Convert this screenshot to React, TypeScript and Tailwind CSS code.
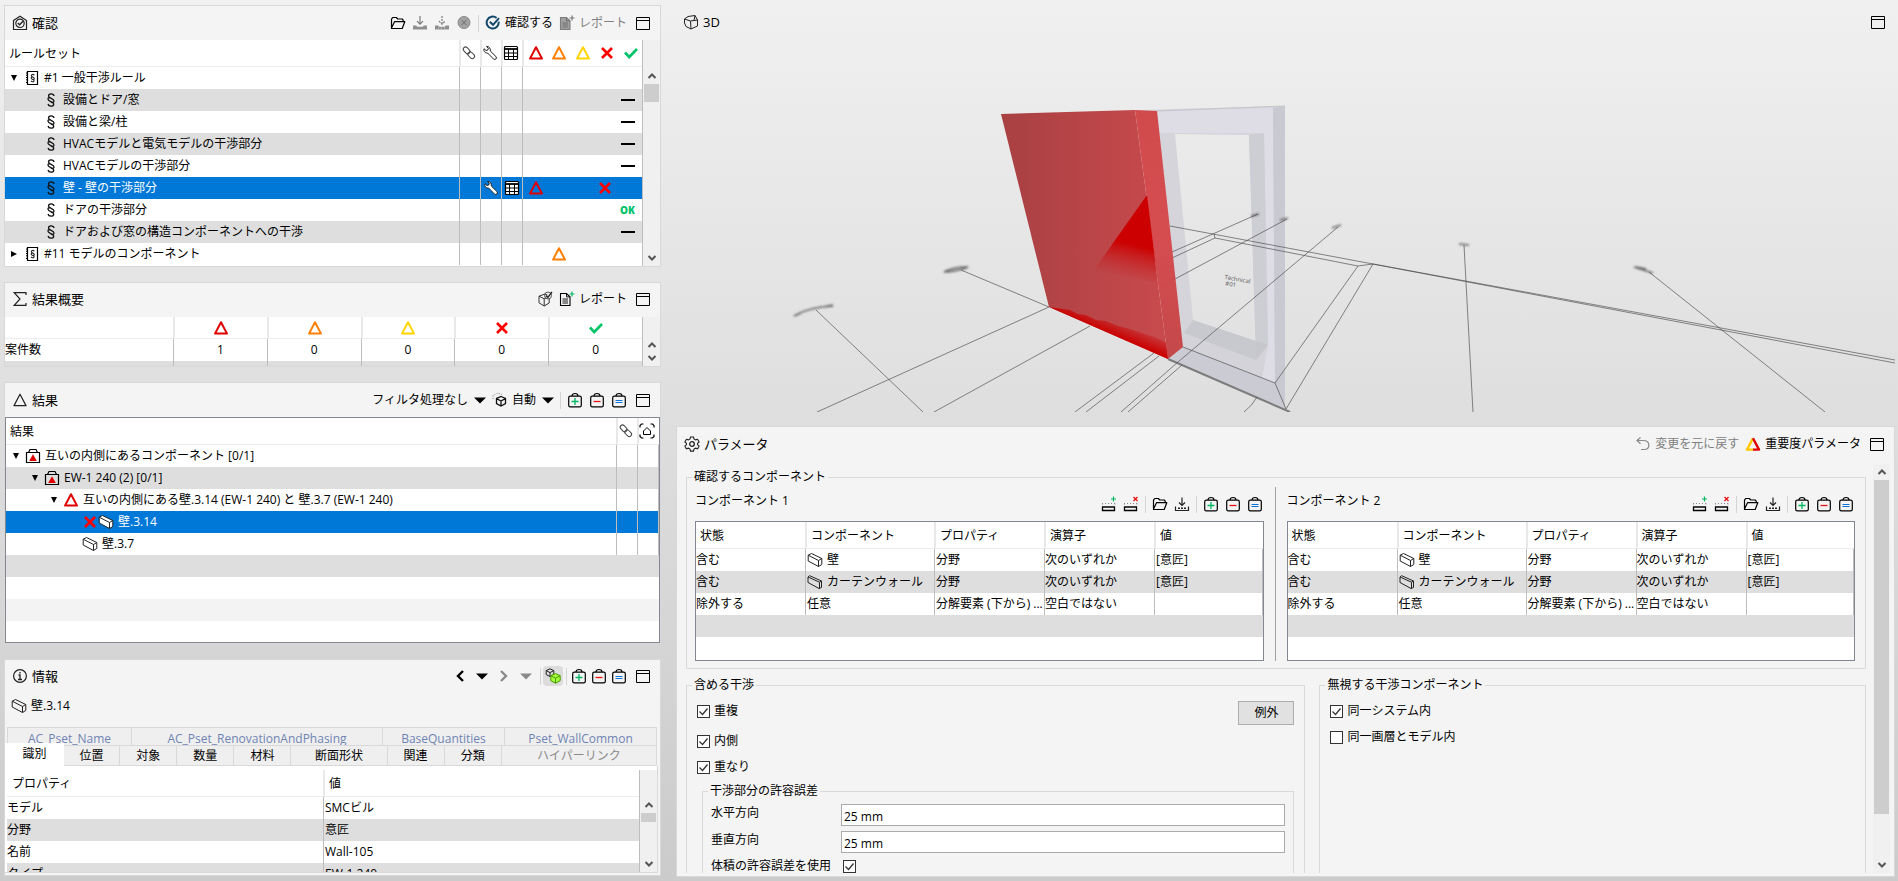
import { useState } from 'react'
import type { ReactNode } from 'react'
import clsx from 'clsx'

type IconProps = { className?: string; color?: string; thin?: boolean }

function Svg({ children, className }: { children: ReactNode; className?: string }) {
  return (
    <svg viewBox="0 0 16 16" fill="none" className={clsx('h-4 w-4 shrink-0', className)} aria-hidden="true">
      {children}
    </svg>
  )
}

const Triangle = ({ color = '#e00000', className, thin }: IconProps) => (
  <Svg className={className}>
    <path d="M8 2.2 14 13.6H2Z" stroke={color} strokeWidth={thin ? 1.2 : 2} strokeLinejoin="round" />
  </Svg>
)

const Cross = () => (
  <Svg>
    <path d="M3 3l10 10M13 3 3 13" stroke="#ff0000" strokeWidth="2.6" />
  </Svg>
)

const Check = () => (
  <Svg>
    <path d="m2 7.5 4.2 4.5L14 4" stroke="#00c46a" strokeWidth="2.6" />
  </Svg>
)

const Dash = () => (
  <Svg>
    <path d="M1 8h14" stroke="#000" strokeWidth="2" />
  </Svg>
)

const WindowIcon = () => (
  <Svg>
    <path d="M1.5 2.5h13v12h-13zM1.5 5.5h13" stroke="#000" />
  </Svg>
)

const Folder = () => (
  <Svg>
    <path
      d="M1.5 12.5V4.2l1.2-1.7h3.6L7.8 4h4.4l1 1.2v1.2M1.5 13l3-6.3h10.3l-2.6 6.8H1.5Z"
      stroke="#000"
      strokeWidth="1.2"
      strokeLinejoin="round"
    />
  </Svg>
)

const SaveIcon = () => (
  <Svg>
    <path d="M8 1.5v8M5 6.5l3 3 3-3" stroke="#222" strokeWidth="1.2" />
    <path d="M1.5 10.5v4h13v-4" stroke="#222" strokeWidth="1.2" />
    <path d="M4 12.2h2M7 12.2h2M10 12.2h2" stroke="#222" strokeWidth="1.6" />
  </Svg>
)

const SaveGray = ({ dashed }: { dashed?: boolean }) => (
  <Svg>
    <path d="M8 1v8M5 6.2l3 3 3-3" stroke="#7a7a7a" strokeWidth="1.2" strokeDasharray={dashed ? '2 1' : undefined} />
    <path d="M1 10.5h3l1.5 1.2h5l1.5-1.2h3v4H1z" fill="#8f8f8f" />
    {dashed && <path d="M4 13h8" stroke="#d4d4d4" strokeDasharray="1 2" />}
  </Svg>
)

const StopGray = () => (
  <Svg>
    <circle cx="8" cy="7.5" r="6" fill="#a3a3a3" stroke="#8a8a8a" />
    <path d="m5.5 5 5 5m0-5-5 5" stroke="#6b6b6b" />
  </Svg>
)

const CheckCircle = () => (
  <Svg>
    <path d="M13.6 6.6A6 6 0 1 1 11.6 3" stroke="#12496b" strokeWidth="2" />
    <path d="m4.8 6.8 3.2 3 6-6.6" stroke="#12496b" strokeWidth="2" />
  </Svg>
)

const DocPlus = ({ gray }: { gray?: boolean }) => (
  <Svg>
    <path
      d="M1.5 2.5h6l3.5 3.3v8.7H1.5z"
      fill={gray ? '#a0a0a0' : 'none'}
      stroke={gray ? '#7d7d7d' : '#000'}
      strokeWidth="1.1"
    />
    <path d="M7.5 2.5v3.4H11M3.5 8h5.5M3.5 10h5.5M3.5 12h5.5" stroke={gray ? '#6a6a6a' : '#000'} strokeWidth="0.9" />
    <path d="M13 .5v5M10.5 3h5" stroke={gray ? '#777' : '#00b862'} strokeWidth="1.2" />
  </Svg>
)

function Bag({ kind }: { kind: 'add' | 'remove' | 'set' }) {
  return (
    <Svg>
      <rect x="1.7" y="4.2" width="12.6" height="10.6" rx="1.6" stroke="#000" strokeWidth="1.2" />
      <path d="M5 4c0-1.4 1.2-2.5 3-2.5S11 2.6 11 4" stroke="#000" strokeWidth="1.2" />
      {kind === 'add' && <path d="M8 6v7M4.5 9.5h7" stroke="#00b862" strokeWidth="1.3" />}
      {kind === 'remove' && <path d="M4.5 9.5h7" stroke="#e81010" strokeWidth="1.3" />}
      {kind === 'set' && <path d="M4.5 8.5h7M4.5 10.5h7" stroke="#0c74d6" strokeWidth="1.1" />}
    </Svg>
  )
}

const LinkIcon = () => (
  <Svg>
    <rect x="-3.8" y="-2.3" width="7.6" height="4.6" rx="2.3" transform="translate(5.6 5.4) rotate(45)" stroke="#444" />
    <rect x="-3.8" y="-2.3" width="7.6" height="4.6" rx="2.3" transform="translate(10.2 10.2) rotate(45)" stroke="#444" />
  </Svg>
)

const Wrench = ({ filled }: { filled?: boolean }) => (
  <Svg>
    <path
      d="M4.6 1.5 6.3 3.3 5.8 5 4 5.5 2 3.7C1.2 6 3 8.300 5.600 8l6.100 6.200c1.500 1 3.400-.7 2.500-2.400L8.300 6C8.800 3.400 7 1.200 4.600 1.500Z"
      fill={filled ? '#fff' : 'none'}
      stroke="#222"
      strokeLinejoin="round"
    />
  </Svg>
)

const Grid = ({ filled }: { filled?: boolean }) => (
  <Svg>
    <rect x="1.5" y="1.5" width="13" height="13" rx="1" fill={filled ? '#fff' : 'none'} stroke="#000" strokeWidth="1.2" />
    <path d="M1.5 4h13" stroke="#000" strokeWidth="1.8" />
    <path d="M1.5 8h13M1.5 11.5h13M5.5 4v10.5M10.5 4v10.5" stroke="#000" />
  </Svg>
)

const Book = () => (
  <Svg>
    <path d="M3.5 1.5h10v13h-10z" stroke="#000" strokeWidth="1.2" />
    <path d="M2 3h2M2 5.200h2M2 7.500h2M2 9.800h2M2 12.500h2" stroke="#000" />
    <path
      d="M10.300 5.200C9.500 4 7.300 4.200 7.300 5.600c0 1.500 3 1.300 3 3 0 .9-1.500 1.100-2 .4M8.700 6.500C7 7.200 6.800 8.300 7.900 9c1.300.7 2.500 1 2.200 2.100-.4 1-2.300 1-3-.2"
      stroke="#222"
      strokeWidth="1.100"
    />
  </Svg>
)

const Section = () => (
  <Svg>
    <path
      d="M11 4C10.600 1.300 5.600 1 5.500 4c0 2.400 5.500 2.300 5.500 5 0 1.400-1.700 1.900-3 1.200M8 6C5.800 5.300 4.800 6.100 5 7.300c.2 2.200 6 2.500 5.700 5-.3 2.600-5 2.500-5.700-.3"
      stroke="#111"
      strokeWidth="1.300"
    />
  </Svg>
)

const Wall = ({ filled, thin }: { filled?: boolean; thin?: boolean }) => (
  <Svg>
    <path
      d={thin ? 'M1 3 2.500 1.700 14.500 7v6.500L12 14.500 1 8.500Z' : 'M1.200 3.200 4.500 1.500l10.300 5v6l-3.300 2L1.200 9Z'}
      fill={filled ? '#fff' : 'none'}
      stroke="#222"
      strokeLinejoin="round"
    />
    <path d={thin ? 'M1 3 12.500 8.200v6.300M12.500 8.200l2-1.200' : 'm1.200 3.200 10.300 5.300v6M11.500 8.500l3.300-2'} stroke="#222" />
  </Svg>
)

const CaseFolder = () => (
  <Svg>
    <path d="M1.5 4.5h13v10h-13zM3.5 4.5l1.5-3h6l1.5 3" stroke="#000" strokeWidth="1.2" />
    <path d="M8 6.2 11.8 13H4.2Z" fill="#e00000" />
  </Svg>
)

const Focus = () => (
  <Svg>
    <path d="M1 4.5V2.500L2.500 1h2M11.500 1h2L15 2.500v2M15 11.500v2L13.500 15h-2M4.500 15h-2L1 13.500v-2" stroke="#000" strokeWidth="1.200" />
    <path d="M4.500 11.500V8L8 4.500 11.500 8v3.500z" stroke="#000" />
  </Svg>
)

const AutoCube = () => (
  <Svg>
    <path d="M1 7V3.500L6 1l4 1.500" stroke="#777" strokeDasharray="1 1.500" />
    <path d="m9 4.500 4.500 2v5L9 14l-4.500-2.500v-5ZM4.500 6.500 9 9l4.500-2.500M9 9v5" stroke="#111" strokeWidth="1.300" />
  </Svg>
)

const TwoCubes = () => (
  <Svg>
    <path d="m5 .8 3.800 1.800v4L5 8.500 1.200 6.600v-4ZM1.200 2.600 5 4.600l3.800-2M5 4.600v3.900" stroke="#222" />
    <path d="m10.500 5.500 4.700 2.200v5l-4.700 2.500-4.700-2.500v-5Z" fill="#a4ff3a" stroke="#4a9a00" />
    <path d="m5.800 7.700 4.700 2.500 4.700-2.500M10.500 10.200v5" stroke="#4a9a00" />
  </Svg>
)

const CubeCheck = () => (
  <Svg>
    <path d="M10.500 4 8 3 2 5.200v6.600L7.200 15l5-3V7.800M2 5.200l5.200 2.600V15M7.200 7.800l2-.8" stroke="#333" />
    <circle cx="11" cy="4.500" r="3.500" stroke="#444" strokeWidth="0.900" />
    <path d="m8.800 4.500 2 2L15 1" stroke="#222" strokeWidth="1.300" />
  </Svg>
)

const Cube3D = () => (
  <Svg>
    <path d="M1.500 5 5 2.500l7-1L14.500 6v6L8 15l-5-2.500-1.500-3.500ZM1.500 5 7.500 7l7-1M12 1.500l-1 4.800M7.500 7 8 15" stroke="#222" />
  </Svg>
)

const RowIcon = ({ kind }: { kind: 'add' | 'remove' }) => (
  <Svg>
    <path d="M1.500 7.500v3M1 7.500h13M14 7.500v3" stroke="#888" strokeDasharray="1 2" />
    <path d="M1.500 11h12v3.500h-12z" stroke="#000" strokeWidth="1.300" />
    {kind === 'add' ? (
      <path d="M12.500.5v5M10 3h5" stroke="#00b862" strokeWidth="1.200" />
    ) : (
      <path d="m10.500 1 4 4m0-4-4 4" stroke="#e81010" strokeWidth="1.300" />
    )}
  </Svg>
)

const Gear = () => (
  <Svg>
    <path
      d="M6.500 1h3l.5 2 1.600.9 2-.6 1.500 2.600-1.500 1.400v1.500l1.500 1.400-1.500 2.600-2-.6-1.600.9-.5 2h-3L6 13.100l-1.600-.9-2 .6L.9 10.200l1.500-1.400V7.300L.9 5.900l1.500-2.600 2 .6L6 3Z"
      stroke="#222"
      strokeWidth="1.100"
    />
    <circle cx="8" cy="8" r="2.300" stroke="#222" strokeWidth="1.300" />
  </Svg>
)

const Undo = () => (
  <Svg>
    <path d="M5.500 1.500 2 4.500l3.500 3.200M2 4.500h7c6.500.5 6.500 9 0 9H6" stroke="#8a8a8a" strokeWidth="1.200" />
  </Svg>
)

const SeverityTriangle = () => (
  <Svg>
    <path d="M8 2.200 2 13.600h6" stroke="#ffc800" strokeWidth="2.400" strokeLinejoin="round" />
    <path d="M8 2.200 14 13.600H8" stroke="#e00000" strokeWidth="2.400" strokeLinejoin="round" />
  </Svg>
)

const CheckingIcon = () => (
  <Svg>
    <path d="M1.500 5.500 8 1.200l6.500 4.300v9h-13z" stroke="#222" strokeWidth="1.200" />
    <circle cx="8" cy="8.300" r="4.200" stroke="#222" strokeWidth="1.200" />
    <path d="m5.800 8 1.800 1.800 3.400-3.500" stroke="#222" strokeWidth="1.300" />
  </Svg>
)

const Sigma = () => (
  <Svg>
    <path d="M14 4V1.700H2.200L8 8l-5.800 6.300H14V12" stroke="#222" strokeWidth="1.200" />
  </Svg>
)

const Info = () => (
  <Svg>
    <circle cx="8" cy="8" r="6.400" stroke="#222" strokeWidth="1.200" />
    <path d="M8 4v1.500M6.500 7H8v4.500M6 11.500h4" stroke="#222" strokeWidth="1.300" />
  </Svg>
)

const Caret = ({ gray }: { gray?: boolean }) => (
  <svg viewBox="0 0 12 7" className="h-[7px] w-3 shrink-0" aria-hidden="true">
    <path d="M0 .5h12L6 6.500Z" fill={gray ? '#8a8a8a' : '#000'} />
  </svg>
)

const Chevron = ({ dir, gray }: { dir: 'left' | 'right'; gray?: boolean }) => (
  <Svg>
    <path d={dir === 'left' ? 'M11 3 6 8l5 5' : 'm5 3 5 5-5 5'} stroke={gray ? '#8a8a8a' : '#000'} strokeWidth="2.400" />
  </Svg>
)

const Expander = ({ open }: { open: boolean }) => (
  <svg viewBox="0 0 8 8" className="h-2 w-2 shrink-0" aria-hidden="true">
    <path d={open ? 'M1 1h6L4 7Z' : 'M1 1v6l6-3Z'} fill="#000" />
  </svg>
)

function ScrollArrow({ up }: { up?: boolean }) {
  return (
    <svg viewBox="0 0 16 16" className="h-4 w-4 shrink-0" aria-hidden="true">
      <path d={up ? 'm4.500 10 3.500-3.500L11.500 10' : 'M4.500 6 8 9.500 11.500 6'} fill="none" stroke="#555" strokeWidth="2" />
    </svg>
  )
}

function ScrollBar({ thumb, className }: { thumb?: string; className?: string }) {
  return (
    <div className={clsx('flex w-[17px] shrink-0 flex-col items-center justify-between bg-[#f0f0f0]', className)}>
      <div className="flex min-h-0 flex-1 flex-col items-center">
        <ScrollArrow up />
        {thumb && <div className={clsx('w-[15px] bg-[#cdcdcd]', thumb)} />}
      </div>
      <ScrollArrow />
    </div>
  )
}

function Tool({ label, children, disabled, text }: { label: string; children?: ReactNode; disabled?: boolean; text?: string }) {
  return (
    <button
      type="button"
      aria-label={label}
      disabled={disabled}
      className={clsx('flex shrink-0 items-center gap-1 whitespace-nowrap', disabled && 'text-[#808080]')}
    >
      {children}
      {text}
    </button>
  )
}

const Sep = () => <span className="h-[17px] w-px shrink-0 bg-[#d4d4d4]" />

const Bags = () => (
  <>
    <Tool label="選択に追加"><Bag kind="add" /></Tool>
    <Tool label="選択から除去"><Bag kind="remove" /></Tool>
    <Tool label="選択に設定"><Bag kind="set" /></Tool>
  </>
)

type HeaderProps = { icon: ReactNode; title: string; children?: ReactNode; gap?: string; className?: string }

function PanelHeader({ icon, title, children, gap = 'gap-1.5', className }: HeaderProps) {
  return (
    <header className={clsx('flex h-[34px] shrink-0 items-center justify-between pr-[9px] pl-[7px]', className)}>
      <h2 className="flex items-center gap-1 text-[13px]">
        {icon}
        {title}
      </h2>
      <div className={clsx('flex items-center', gap)}>
        {children}
        <span className="ml-0.5 flex">
          <Tool label="最大化"><WindowIcon /></Tool>
        </span>
      </div>
    </header>
  )
}

const panel = 'flex min-h-0 min-w-0 flex-col overflow-hidden border border-[#d8d8d8] bg-[#f4f4f4]'
const line = 'border-l border-[#bdbdbd]'
const headLine = 'border-l-2 border-[#e8e8e8]'

type Status = 'none' | 'ok' | 'fail'
const rules: { name: string; status: Status }[] = [
  { name: '設備とドア/窓', status: 'none' },
  { name: '設備と梁/柱', status: 'none' },
  { name: 'HVACモデルと電気モデルの干渉部分', status: 'none' },
  { name: 'HVACモデルの干渉部分', status: 'none' },
  { name: '壁 - 壁の干渉部分', status: 'fail' },
  { name: 'ドアの干渉部分', status: 'ok' },
  { name: 'ドアおよび窓の構造コンポーネントへの干渉', status: 'none' },
]

function CheckingPanel() {
  const [selected, setSelected] = useState(4)

  return (
    <section className={panel}>
      <PanelHeader icon={<CheckingIcon />} title="確認">
        <Tool label="開く"><Folder /></Tool>
        <Tool label="保存" disabled><SaveGray /></Tool>
        <Tool label="名前を付けて保存" disabled><SaveGray dashed /></Tool>
        <Tool label="停止" disabled><StopGray /></Tool>
        <Sep />
        <Tool label="確認する" text="確認する"><CheckCircle /></Tool>
        <Tool label="レポート" text="レポート" disabled><DocPlus gray /></Tool>
      </PanelHeader>
      <div className="flex min-h-0 flex-1">
        <div className="min-w-0 flex-1 overflow-hidden border-r border-[#bdbdbd] bg-white">
          <table className="w-full table-fixed border-separate border-spacing-0">
            <colgroup>
              <col />
              <col className="w-[21px]" />
              <col className="w-[21px]" />
              <col className="w-[21px]" />
              <col className="w-6" />
              <col className="w-6" />
              <col className="w-6" />
              <col className="w-6" />
              <col className="w-6" />
            </colgroup>
            <thead>
              <tr className="h-[27px] [&>th]:border-b [&>th]:border-b-[#ececec]">
                <th className="pt-0.5 pl-1 text-left font-normal">ルールセット</th>
                <th className={headLine}><LinkIcon /></th>
                <th className={headLine}><Wrench /></th>
                <th className={headLine}><Grid /></th>
                <th className={headLine}><Triangle className="ml-1" /></th>
                <th><Triangle color="#ff7f00" className="ml-[5px]" /></th>
                <th><Triangle color="#ffd500" className="ml-[5px]" /></th>
                <th className="pl-[5px]"><Cross /></th>
                <th className="pl-[5px]"><Check /></th>
              </tr>
            </thead>
            <tbody>
              <tr className="h-[22px]">
                <td>
                  <div className="flex items-center pl-[5px]">
                    <Expander open />
                    <span className="mr-1 ml-1.5"><Book /></span>
                    #1 一般干渉ルール
                  </div>
                </td>
                <td className={line} /><td className={line} /><td className={line} /><td className={line} />
                <td /><td /><td /><td />
              </tr>
              {rules.map((rule, i) => (
                <tr
                  key={rule.name}
                  onClick={() => setSelected(i)}
                  className={clsx('h-[22px]', i === selected ? 'bg-[#0078d7] text-white' : i % 2 === 0 && 'bg-[#dedede]')}
                >
                  <td>
                    <div className="flex items-center gap-1 pl-[38px] whitespace-nowrap">
                      <Section />
                      {rule.name}
                    </div>
                  </td>
                  <td className={line} />
                  <td className={line}>{rule.status === 'fail' && <div className="pl-0.5"><Wrench filled /></div>}</td>
                  <td className={line}>{rule.status === 'fail' && <div className="pl-0.5"><Grid filled /></div>}</td>
                  <td className={line}>{rule.status === 'fail' && <Triangle className="ml-[5px]" />}</td>
                  <td />
                  <td />
                  <td>{rule.status === 'fail' && <div className="pl-[3px]"><Cross /></div>}</td>
                  <td>
                    <div className="pl-0.5">
                      {rule.status === 'none' && <Dash />}
                      {rule.status === 'ok' && <span className="text-[10px] font-extrabold text-[#00c46a]">OK</span>}
                    </div>
                  </td>
                </tr>
              ))}
              <tr className="h-[22px]">
                <td>
                  <div className="flex items-center pl-[5px]">
                    <Expander open={false} />
                    <span className="mr-1 ml-1.5"><Book /></span>
                    #11 モデルのコンポーネント
                  </div>
                </td>
                <td className={line} /><td className={line} /><td className={line} /><td className={line} />
                <td><Triangle color="#ff7f00" className="ml-[5px]" /></td>
                <td /><td /><td />
              </tr>
            </tbody>
          </table>
        </div>
        <ScrollBar thumb="h-[18px]" className="pt-7" />
      </div>
    </section>
  )
}

function SummaryPanel() {
  return (
    <section className={panel}>
      <PanelHeader icon={<Sigma />} title="結果概要" className="pb-0.5">
        <Tool label="可視化"><CubeCheck /></Tool>
        <Tool label="レポート" text="レポート"><DocPlus /></Tool>
      </PanelHeader>
      <div className="flex min-h-0 flex-1">
        <div className="min-w-0 flex-1 overflow-hidden border-r border-[#bdbdbd] bg-white">
          <table className="w-full table-fixed border-separate border-spacing-0 text-center">
            <colgroup>
              <col className="w-[168px]" />
              <col span={5} />
            </colgroup>
            <thead>
              <tr className="h-[22px] [&>th]:border-b [&>th]:border-b-[#ececec]">
                <th />
                <th className={headLine}><Triangle className="mx-auto" /></th>
                <th className={headLine}><Triangle color="#ff7f00" className="mx-auto" /></th>
                <th className={headLine}><Triangle color="#ffd500" className="mx-auto" /></th>
                <th className={headLine}><div className="flex justify-center"><Cross /></div></th>
                <th className={headLine}><div className="flex justify-center"><Check /></div></th>
              </tr>
            </thead>
            <tbody>
              <tr className="h-[22px]">
                <td className="text-left">案件数</td>
                {[1, 0, 0, 0, 0].map((n, i) => (
                  <td key={i} className={line}>{n}</td>
                ))}
              </tr>
              <tr className="h-[22px] bg-[#dedede]">
                <td className="pt-1 text-left">未処理の案件</td>
                {[0, 1, 2, 3, 4].map((i) => (
                  <td key={i} className={line} />
                ))}
              </tr>
            </tbody>
          </table>
        </div>
        <ScrollBar className="pt-5" />
      </div>
    </section>
  )
}

const resultRows = [
  { pad: 'pl-1.5', icon: <CaseFolder />, text: '互いの内側にあるコンポーネント [0/1]', open: true },
  { pad: 'pl-[25px]', icon: <CaseFolder />, text: 'EW-1 240 (2) [0/1]', open: true },
  { pad: 'pl-11', icon: <Triangle />, text: '互いの内側にある壁.3.14 (EW-1 240) と 壁.3.7 (EW-1 240)', open: true },
  { pad: 'pl-[76px]', icon: <><Cross /><Wall filled /></>, text: '壁.3.14' },
  { pad: 'pl-[76px]', icon: <Wall />, text: '壁.3.7' },
]

function ResultsPanel() {
  const [selected, setSelected] = useState(3)

  return (
    <section className={panel}>
      <PanelHeader icon={<Triangle color="#222" thin />} title="結果">
        <Tool label="フィルタ" text="フィルタ処理なし" />
        <Caret />
        <Tool label="自動" text="自動"><AutoCube /></Tool>
        <Caret />
        <Sep />
        <Bags />
      </PanelHeader>
      <div className="min-h-0 flex-1 overflow-hidden border border-[#828790] bg-white">
        <table className="w-full table-fixed border-separate border-spacing-0">
          <colgroup>
            <col />
            <col className="w-[21px]" />
            <col className="w-[22px]" />
          </colgroup>
          <thead>
            <tr className="h-[27px] [&>th]:border-b [&>th]:border-b-[#ececec]">
              <th className="pt-0.5 pl-1 text-left font-normal">結果</th>
              <th className={headLine}><LinkIcon /></th>
              <th className={headLine}><Focus /></th>
            </tr>
          </thead>
          <tbody>
            {resultRows.map((row, i) => (
              <tr
                key={i}
                onClick={() => setSelected(i)}
                className={clsx('h-[22px]', i === selected ? 'bg-[#0078d7] text-white' : i % 2 === 1 && 'bg-[#dedede]')}
              >
                <td>
                  <div className={clsx('flex items-center whitespace-nowrap', row.pad)}>
                    {row.open && <span className="mr-[5px]"><Expander open /></span>}
                    {row.icon}
                    <span className="ml-1">{row.text}</span>
                  </div>
                </td>
                <td className={line} />
                <td className={clsx(line, 'border-r')} />
              </tr>
            ))}
            <tr className="h-[22px] bg-[#dedede]"><td colSpan={3} /></tr>
            <tr className="h-[22px]"><td colSpan={3} /></tr>
            <tr className="h-[22px] bg-[#f3f3f3]"><td colSpan={3} /></tr>
          </tbody>
        </table>
      </div>
    </section>
  )
}

const infoTabs = ['識別', '位置', '対象', '数量', '材料', '断面形状', '関連', '分類', 'ハイパーリンク']
const psetTabs = ['AC_Pset_Name', 'AC_Pset_RenovationAndPhasing', 'BaseQuantities', 'Pset_WallCommon']
const infoRows = [
  ['モデル', 'SMCビル'],
  ['分野', '意匠'],
  ['名前', 'Wall-105'],
  ['タイプ', 'EW-1 240'],
]

function InfoPanel() {
  const [tab, setTab] = useState('識別')

  return (
    <section className={panel}>
      <PanelHeader icon={<Info />} title="情報" gap="gap-1" className="pb-0.5">
        <Tool label="戻る"><Chevron dir="left" /></Tool>
        <span className="px-1"><Caret /></span>
        <Tool label="進む" disabled><Chevron dir="right" gray /></Tool>
        <span className="px-1"><Caret gray /></span>
        <Sep />
        <button
          type="button"
          aria-label="自動更新"
          className="-mr-px -ml-0.5 flex h-5 w-5 items-center justify-center rounded bg-[#dcdcdc]"
        >
          <TwoCubes />
        </button>
        <Sep />
        <Bags />
        <span className="-ml-0.5" />
      </PanelHeader>
      <div className="flex h-6 shrink-0 items-center gap-1 pl-1.5">
        <Wall />
        壁.3.14
      </div>
      <div className="mt-[9px] mr-[3px] ml-0.5 grid h-[18px] shrink-0 grid-cols-[124fr_251fr_122fr_152fr] overflow-hidden border-t border-l border-[#d9d9d9]">
        {psetTabs.map((name) => (
          <button key={name} type="button" className="h-[22px] border-r border-[#d9d9d9] bg-[#efefef] text-[#7084b4]">
            {name}
          </button>
        ))}
      </div>
      <div className="mr-[3px] grid h-[21px] shrink-0 grid-cols-[59fr_56fr_57fr_57fr_57fr_96fr_57fr_57fr_155fr]">
        {infoTabs.map((name) => (
          <button
            key={name}
            type="button"
            onClick={() => setTab(name)}
            disabled={name === 'ハイパーリンク'}
            className={clsx(
              tab === name ? '-mt-0.5 bg-white pb-0.5' : 'border-t border-r border-b border-[#d9d9d9] bg-[#efefef]',
              name === 'ハイパーリンク' && 'text-[#8a8a8a]',
            )}
          >
            {name}
          </button>
        ))}
      </div>
      <div className="mr-0.5 mb-0.5 flex min-h-0 flex-1 border-r border-b border-[#d9d9d9] bg-white pt-1 pl-0.5">
        <div className="min-w-0 flex-1 overflow-hidden border-r border-[#bdbdbd]">
          <table className="w-full table-fixed border-separate border-spacing-0">
            <thead>
              <tr className="h-[27px] text-left [&>th]:border-b [&>th]:border-b-[#ececec]">
                <th className="pt-0.5 pl-[5px] font-normal">プロパティ</th>
                <th className={clsx(headLine, 'pt-0.5 pl-1 font-normal')}>値</th>
              </tr>
            </thead>
            <tbody>
              {infoRows.map(([name, value], i) => (
                <tr key={name} className={clsx('h-[22px]', i % 2 === 1 && 'bg-[#dedede]')}>
                  <td>{name}</td>
                  <td className={clsx(line, 'pl-px')}>{value}</td>
                </tr>
              ))}
            </tbody>
          </table>
        </div>
        <ScrollBar thumb="h-[9px]" className="pt-[27px]" />
      </div>
    </section>
  )
}

const floorLines = [
  'M961 270 1049 307', 'M816 310 923 412', 'M1049 307 817 412', 'M1090 326 934 412',
  'M1154 353 1075 412', 'M1159 356 1086 412', 'M1178 362 1121 412', 'M1182 365 1128 412',
  'M1178 362 1338 227', 'M1175 279 1287 219', 'M1172 252 1258 214', 'M1172 258 1215 238 1214 234',
  'M1170 226 1373 264 1895 360', 'M1215 238 1358 266 1373 264 1895 363', 'M1358 266 1275 383',
  'M1373 264 1286 409', 'M1183 347 1275 383 1286 409', 'M1257 397q-5 9-13 15', 'M1464 245 1473 412',
  'M1649 272 1825 412',
]

function Scene() {
  return (
    <svg
      viewBox="676 40 1219 372"
      preserveAspectRatio="xMidYMax meet"
      className="min-h-0 w-full flex-1"
      role="img"
      aria-label="3D"
    >
      <defs>
        <linearGradient id="wallFace" x1="0" x2="1">
          <stop offset="0" stopColor="#a84042" />
          <stop offset="1" stopColor="#c94a4d" />
        </linearGradient>
        <linearGradient id="wallEdge" x1="0" x2="0" y1="0" y2="1">
          <stop offset="0" stopColor="#d04a4c" />
          <stop offset="0.5" stopColor="#d64d50" />
          <stop offset="1" stopColor="#c4484a" />
        </linearGradient>
        <linearGradient id="clash" x1="1150" x2="1140" y1="240" y2="281" gradientUnits="userSpaceOnUse">
          <stop offset="0" stopColor="#cc0000" />
          <stop offset="0.2" stopColor="#cc0000" />
          <stop offset="1" stopColor="#c42a2c" stopOpacity="0.1" />
        </linearGradient>
        <linearGradient id="ground" x1="1112" x2="1103" y1="314" y2="336" gradientUnits="userSpaceOnUse">
          <stop offset="0" stopColor="#c80000" stopOpacity="0" />
          <stop offset="0.8" stopColor="#cc0000" />
        </linearGradient>
        <filter id="smear" x="-30%" y="-100%" width="160%" height="300%">
          <feGaussianBlur stdDeviation="0.8" />
        </filter>
      </defs>

      {/* transparent wall with the opening */}
      <path
        d="M1140 110 1285 106V409L1168 359ZM1175 134 1193 320 1256 341 1249 135Z"
        fillRule="evenodd"
        fill="#d2d2d8"
        fillOpacity="0.9"
      />
      <path d="M1157 111 1273 108 1275 383 1262 378 1268 345 1264 133 1160 133Z" fill="#dedde5" />
      <path d="M1249 135 1264 133 1268 345 1256 360Z" fill="#cdcdd4" />
      <path d="M1273 108 1285 106V409L1275 383Z" fill="#c9c9d1" />
      <path d="M1193 320 1268 345 1256 360 1184 333Z" fill="#c3c4ca" fillOpacity="0.7" />
      <path d="M1183 347 1275 383 1285 409 1168 359Z" fill="#c8c8d0" fillOpacity="0.7" />
      <path d="M1157 111 1285 106" stroke="#c5c5cc" />

      <g fill="none" stroke="#4a4a4a" strokeOpacity="0.65">
        {floorLines.map((d) => (
          <path key={d} d={d} />
        ))}
      </g>
      <path d="M1168 359 1290 412" stroke="#555" strokeOpacity="0.7" strokeWidth="2" />

      <g fill="none" stroke="#444" strokeOpacity="0.8" strokeWidth="1.6" filter="url(#smear)">
        <path d="M794 316q15-9 39-10M794 316l7-3M823 307l10-2" />
        <path d="M944 272q8-5 24-5-8 4-24 5M944 272l10-1" />
        <path d="m1251 216 8-2M1280 220l8-2M1332 228l9-3M1459 244l10 1" />
        <path d="m1634 267 19 6M1636 267l10 2" />
      </g>

      <g transform="rotate(10 1224 280)" fontSize="6" fill="#555">
        <text x="1224" y="279">Technical</text>
        <text x="1226" y="285">#01</text>
      </g>

      <path d="M1001 114 1135 110 1168 359 1049 307Z" fill="url(#wallFace)" />
      <path d="M1135 110 1157 111 1183 347 1168 359Z" fill="url(#wallEdge)" />
      <path d="M1147 195 1158 283 1094 270Z" fill="url(#clash)" />
      <path d="M1049 307 1070 310 1078 314 1086 315 1096 320 1106 321 1118 326 1130 329 1142 333 1154 337 1166 342 1168 359Z" fill="url(#ground)" />
    </svg>
  )
}

const wallIcon = <Wall />
const curtainIcon = <Wall thin />
const filterRows: { state: string; icon?: ReactNode; component: string; property: string; operator: string; value: string }[] = [
  { state: '含む', icon: wallIcon, component: '壁', property: '分野', operator: '次のいずれか', value: '[意匠]' },
  { state: '含む', icon: curtainIcon, component: 'カーテンウォール', property: '分野', operator: '次のいずれか', value: '[意匠]' },
  { state: '除外する', component: '任意', property: '分解要素 (下から) ...', operator: '空白ではない', value: '' },
]

function ComponentFilter({ title }: { title: string }) {
  return (
    <div className="min-w-0">
      <div className="flex h-9 items-center justify-between pr-px">
        <h3 className="pb-1">{title}</h3>
        <div className="flex items-center gap-1.5 pt-0.5">
          <Tool label="行を追加"><RowIcon kind="add" /></Tool>
          <Tool label="行を削除"><RowIcon kind="remove" /></Tool>
          <Sep />
          <Tool label="開く"><Folder /></Tool>
          <Tool label="保存"><SaveIcon /></Tool>
          <Sep />
          <Bags />
        </div>
      </div>
      <div className="h-[140px] overflow-hidden border border-[#828790] bg-white">
        <table className="w-full table-fixed border-separate border-spacing-0">
          <colgroup>
            <col className="w-[109px]" />
            <col className="w-[129px]" />
            <col className="w-[110px]" />
            <col className="w-[110px]" />
            <col />
          </colgroup>
          <thead>
            <tr className="h-[27px] text-left [&>th]:border-b [&>th]:border-b-[#ececec] [&>th]:pt-0.5 [&>th]:pl-1 [&>th]:font-normal">
              <th>状態</th>
              <th className={headLine}>コンポーネント</th>
              <th className={headLine}>プロパティ</th>
              <th className={headLine}>演算子</th>
              <th className={headLine}>値</th>
            </tr>
          </thead>
          <tbody>
            {filterRows.map((row, i) => (
              <tr key={i} className={clsx('h-[22px] whitespace-nowrap', i === 1 && 'bg-[#dedede]')}>
                <td>{row.state}</td>
                <td className={line}>
                  <div className="flex items-center gap-1 pl-px">
                    {row.icon}
                    {row.component}
                  </div>
                </td>
                <td className={clsx(line, 'pl-px')}>{row.property}</td>
                <td className={line}>{row.operator}</td>
                <td className={clsx(line, 'border-r pl-px')}>{row.value}</td>
              </tr>
            ))}
            <tr className="h-[22px] bg-[#dedede]"><td colSpan={5} /></tr>
          </tbody>
        </table>
      </div>
    </div>
  )
}

function CheckBox({ id, defaultChecked }: { id?: string; defaultChecked?: boolean }) {
  return (
    <span className="grid h-[13px] w-[13px] shrink-0">
      <input
        id={id}
        type="checkbox"
        defaultChecked={defaultChecked}
        className="peer col-start-1 row-start-1 h-[13px] w-[13px] appearance-none border border-[#333] bg-white"
      />
      <svg viewBox="0 0 13 13" className="pointer-events-none invisible col-start-1 row-start-1 h-[13px] w-[13px] peer-checked:visible" aria-hidden="true">
        <path d="m2.500 6.500 3 3 5-6" fill="none" stroke="#333" strokeWidth="1.300" />
      </svg>
    </span>
  )
}

function CheckField({ label, checked }: { label: string; checked?: boolean }) {
  return (
    <label className="flex h-5 items-center gap-1">
      <CheckBox defaultChecked={checked} />
      {label}
    </label>
  )
}

const tolerances = [
  { id: 'tol-h', label: '水平方向' },
  { id: 'tol-v', label: '垂直方向' },
]

function ParametersPanel() {
  return (
    <section className={panel}>
      <PanelHeader icon={<Gear />} title="パラメータ">
        <Tool label="変更を元に戻す" text="変更を元に戻す" disabled><Undo /></Tool>
        <Tool label="重要度パラメータ" text="重要度パラメータ"><SeverityTriangle /></Tool>
      </PanelHeader>
      <div className="mt-[3px] mr-1 mb-[3px] flex min-h-0 flex-1">
        <div className="min-w-0 flex-1 overflow-hidden pt-[5px] pr-[7px] pl-[9px]">
          <fieldset className="grid min-w-0 grid-cols-[1fr_1px_1fr] gap-x-[11px] border border-[#d9d9d9] pr-2.5 pb-[7px] pl-2">
            <legend className="ml-[-3px] px-0.5 leading-4">確認するコンポーネント</legend>
            <ComponentFilter title="コンポーネント 1" />
            <div className="mt-0.5 bg-[#a0a0a0]" />
            <ComponentFilter title="コンポーネント 2" />
          </fieldset>
          <div className="mt-2 grid grid-cols-[620fr_547fr] gap-x-3.5">
            <fieldset className="flex min-w-0 flex-col gap-1.5 border border-[#d9d9d9] px-2.5 pt-2 pb-4">
              <legend className="ml-[-5px] px-0.5 leading-4">含める干渉</legend>
              <div className="flex items-start justify-between">
                <CheckField label="重複" checked />
                <button type="button" className="h-6 w-14 border border-[#adadad] bg-[#e1e1e1]">
                  例外
                </button>
              </div>
              <CheckField label="内側" checked />
              <CheckField label="重なり" checked />
              <fieldset className="ml-[5px] min-w-0 border border-[#d9d9d9] px-2 pt-[5px] pb-4">
                <legend className="ml-[-3px] px-0.5 leading-4">干渉部分の許容誤差</legend>
                <div className="grid grid-cols-[130px_1fr] items-center gap-y-[5px]">
                  {tolerances.map(({ id, label }) => (
                    <div key={id} className="contents">
                      <label htmlFor={id} className="pb-1">{label}</label>
                      <input id={id} defaultValue="25 mm" className="h-[22px] min-w-0 border border-[#ababab] bg-white px-0.5 pt-0.5" />
                    </div>
                  ))}
                  <label htmlFor="tol-volume">体積の許容誤差を使用</label>
                  <span className="pl-0.5"><CheckBox id="tol-volume" defaultChecked /></span>
                </div>
              </fieldset>
            </fieldset>
            <fieldset className="flex min-w-0 flex-col gap-1.5 border border-[#d9d9d9] px-2.5 pt-2">
              <legend className="ml-[-5px] px-0.5 leading-4">無視する干渉コンポーネント</legend>
              <CheckField label="同一システム内" checked />
              <CheckField label="同一画層とモデル内" />
            </fieldset>
          </div>
        </div>
        <ScrollBar thumb="h-[85%]" />
      </div>
    </section>
  )
}

export default function App() {
  return (
    <main className="grid h-screen grid-cols-[minmax(0,657fr)_minmax(0,1219fr)] gap-x-[15px] overflow-hidden bg-linear-to-b from-[#f0f0f0] to-[#cbcbcb] pr-[3px] pl-1 font-['Open_Sans','Noto_Sans_CJK_JP',sans-serif] text-xs leading-4 text-black">
      <div className="grid min-h-0 grid-rows-[minmax(0,262fr)_minmax(0,85fr)_minmax(0,262fr)_minmax(0,217fr)] gap-y-[15px] py-[5px]">
        <CheckingPanel />
        <SummaryPanel />
        <ResultsPanel />
        <InfoPanel />
      </div>
      <div className="grid min-h-0 grid-rows-[minmax(0,426fr)_minmax(0,451fr)] pb-1">
        <section className="flex min-h-0 flex-col pt-[5px] pb-3.5">
          <PanelHeader icon={<Cube3D />} title="3D" />
          <Scene />
        </section>
        <ParametersPanel />
      </div>
    </main>
  )
}
